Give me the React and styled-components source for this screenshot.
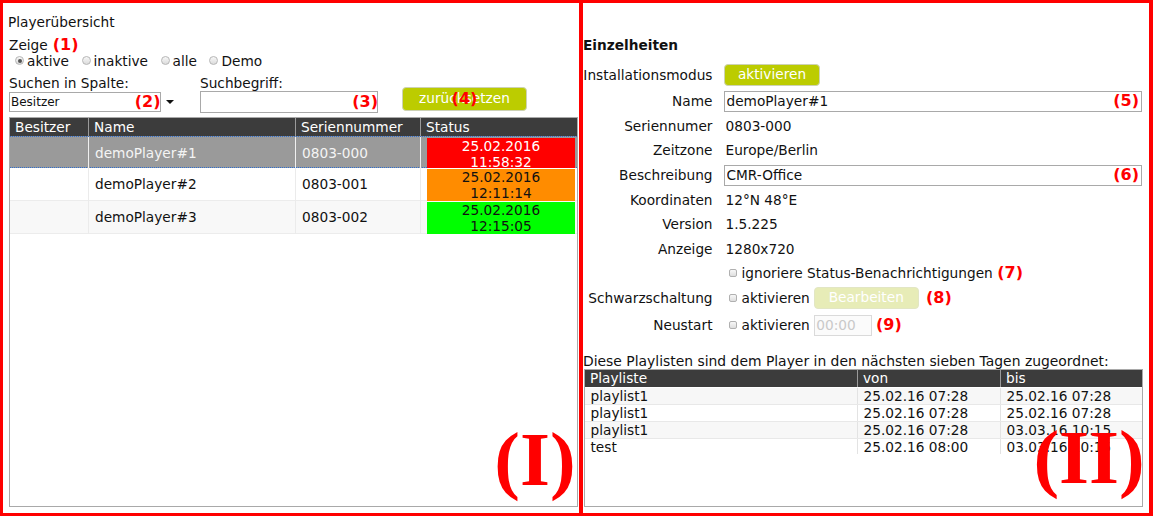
import React from 'react';
import styled, { createGlobalStyle, css } from 'styled-components';

const GlobalStyle = createGlobalStyle`
  html, body { margin: 0; padding: 0; background: #fff; }
  body {
    font-family: "DejaVu Sans", Verdana, sans-serif;
    font-size: 13.7px;
    color: #111;
  }
  *, *::before, *::after { box-sizing: border-box; }
  input, select, button { font-family: "DejaVu Sans", Verdana, sans-serif; }
`;

const Screen = styled.div`
  display: flex;
  width: 1153px;
  height: 516px;
`;

const Panel = styled.section`
  position: relative;
  display: flex;
  flex-direction: column;
  flex: none;
  width: ${p => p.$w}px;
  height: 100%;
  border: 3px solid #ff0000;
  border-right-width: 4px;
  ${p => p.$noLeft && css`border-left: none;`}
  padding: ${p => p.$pad};
  overflow: hidden;
`;

const Title = styled.div`
  line-height: 16px;
  margin-left: -1px;
`;

const ShowLine = styled.div`
  margin-top: 6.2px;
  line-height: 16px;
  white-space: nowrap;
`;

const Mark = styled.span`
  color: #ff0000;
  font-weight: bold;
  font-size: 16px;
  line-height: 16px;
  white-space: nowrap;
  margin-left: ${p => p.$ml || 0}px;
`;

const OverlayMark = styled(Mark)`
  position: absolute;
  top: 50%;
  transform: translateY(-50%);
  pointer-events: none;
  ${p => p.$center
    ? css`left: 50%; transform: translate(-50%, -50%);`
    : css`right: ${p.$right}px;`}
`;

const RadioRow = styled.div`
  display: flex;
  align-items: center;
  gap: 12.5px;
  height: 16px;
  padding-left: 6px;
`;

const RadioOption = styled.label`
  display: flex;
  align-items: center;
  gap: 3px;
  line-height: 16px;
`;

const RadioDot = styled.span`
  position: relative;
  width: 9px;
  height: 9px;
  border-radius: 50%;
  border: 1px solid #b6b6b6;
  background: linear-gradient(#f7f7f7, #dcdcdc);
  &::after {
    content: '';
    display: ${p => (p.$checked ? 'block' : 'none')};
    position: absolute;
    left: 1.5px;
    top: 1.5px;
    width: 4px;
    height: 4px;
    border-radius: 50%;
    background: #555;
  }
`;

const Checkbox = styled.span`
  flex: none;
  width: 8px;
  height: 8px;
  border-radius: 2px;
  border: 1px solid #b0b0b0;
  background: linear-gradient(#f7f7f7, #dedede);
  margin-right: 4.5px;
`;

const SearchArea = styled.div`
  display: flex;
  align-items: flex-end;
  margin-top: 6px;
`;

const Field = styled.div`
  display: flex;
  flex-direction: column;
  width: ${p => p.$w}px;
  flex: none;
`;

const FieldLabel = styled.div`
  line-height: 16px;
`;

const SelectRow = styled.div`
  display: flex;
  align-items: center;
  gap: 5px;
  height: 22px;
`;

const Wrap = styled.div`
  position: relative;
  width: ${p => (p.$w ? `${p.$w}px` : 'calc(100% - 1px)')};
  height: ${p => p.$h}px;
  flex: none;
  margin-left: ${p => p.$ml || 0}px;
`;

const SelectBox = styled.select`
  appearance: none;
  -webkit-appearance: none;
  width: 100%;
  height: 100%;
  margin: 0;
  border: 1px solid #a9a9a9;
  border-radius: 0;
  background: #fff;
  color: #111;
  font-size: 12px;
  padding: 0 1px;
  outline: none;
`;

const TextInput = styled.input`
  width: 100%;
  height: 100%;
  margin: 0;
  border: 1px solid ${p => (p.$soft ? '#dadada' : '#a9a9a9')};
  border-radius: 0;
  background: ${p => (p.$soft ? '#fbfbfb' : '#fff')};
  color: #111;
  font-size: 13.7px;
  padding: 0 1.5px;
  outline: none;
  &::placeholder { color: #c9c9c9; }
`;

const Button = styled.button`
  display: flex;
  align-items: center;
  justify-content: center;
  width: ${p => p.$w}px;
  height: ${p => p.$h}px;
  padding: 0;
  margin: 0;
  border: 1px solid ${p => (p.$disabled ? '#e2e6c4' : '#cdd2b4')};
  border-radius: 4px;
  background: ${p => (p.$disabled ? '#e7ecb7' : '#bccc00')};
  color: #fff;
  font-size: 13.7px;
  line-height: 1;
  white-space: nowrap;
  cursor: default;
`;

const ButtonWrap = styled.div`
  position: relative;
  flex: none;
  margin-bottom: ${p => p.$mb || 0}px;
  margin-left: ${p => p.$ml || 0}px;
`;

const Table = styled.div`
  flex: 1;
  min-height: 0;
  display: flex;
  flex-direction: column;
  border: 1px solid #a9a9a9;
  background: #fff;
  margin-top: ${p => p.$mt || 0}px;
  margin-left: ${p => p.$ml || 0}px;
`;

const HeadRow = styled.div`
  flex: none;
  display: grid;
  grid-template-columns: ${p => p.$cols};
  height: ${p => p.$h}px;
  background: #3c3c3c;
  color: #fff;
`;

const HeadCell = styled.div`
  padding: 0 5px;
  line-height: ${p => p.$h}px;
  border-right: 1px solid #9a9a9a;
  white-space: nowrap;
  overflow: hidden;
  &:last-child { border-right: none; }
`;

const PlayerRow = styled.div`
  flex: none;
  display: grid;
  grid-template-columns: 79px 207px 125px 1fr;
  height: 33px;
  border-bottom: 1px solid #ececec;
  background: ${p => (p.$alt ? '#f8f8f8' : '#fff')};
  ${p => p.$selected && css`
    height: 32px;
    border-top: 1px dotted #2f6fd0;
    border-bottom: 1px dotted #2f6fd0;
    background: #9a9a9a;
    color: #f4f4f4;
  `}
`;

const Cell = styled.div`
  display: flex;
  align-items: center;
  padding: 0 6px;
  white-space: nowrap;
  border-right: 1px solid ${p => (p.$sel ? '#f0f0f0' : '#ebebeb')};
  &:last-child { border-right: none; }
`;

const StatusCell = styled.div`
  display: flex;
  padding: 1px 2px 0 6px;
`;

const StatusBox = styled.div`
  flex: 1;
  background: ${p => p.$bg};
  color: ${p => p.$fg};
  text-align: center;
  line-height: 16px;
`;

const Heading = styled.div`
  font-weight: bold;
  line-height: 16px;
`;

const Form = styled.div`
  display: grid;
  grid-template-columns: 129.5px 1fr;
  grid-template-rows: 28px repeat(9, 24.6px) 30px;
  column-gap: 11.5px;
  align-items: center;
  margin-top: 8.4px;
`;

const Label = styled.div`
  text-align: right;
  line-height: 16px;
  white-space: nowrap;
`;

const Value = styled.div`
  display: flex;
  align-items: center;
  line-height: 16px;
  white-space: nowrap;
  padding-left: ${p => p.$indent || 0}px;
`;

const Caption = styled.div`
  margin-top: 12.9px;
  line-height: 16px;
  font-size: 13.9px;
  white-space: nowrap;
`;

const PlaylistBody = styled.div`
  flex: none;
  height: 66.5px;
  padding-top: 1px;
  overflow: hidden;
`;

const PlaylistRow = styled.div`
  display: grid;
  grid-template-columns: 273px 143px 1fr;
  height: 17px;
  border-bottom: 1px solid #e8e8e8;
  background: ${p => (p.$alt ? '#f7f7f7' : '#fff')};
`;

const PlaylistCell = styled.div`
  padding: 0 5.5px;
  line-height: 16px;
  white-space: nowrap;
  overflow: hidden;
  border-right: 1px solid #e3e3e3;
  &:last-child { border-right: none; }
`;

const BigMark = styled.div`
  position: absolute;
  right: ${p => p.$right}px;
  bottom: ${p => p.$bottom}px;
  font-family: "Liberation Serif", "Times New Roman", serif;
  font-weight: bold;
  font-size: 77px;
  line-height: 1;
  color: #ff0000;
  pointer-events: none;
  z-index: 2;
`;

const players = [
  { name: 'demoPlayer#1', serial: '0803-000', date: '25.02.2016', time: '11:58:32', status: 'error', selected: true },
  { name: 'demoPlayer#2', serial: '0803-001', date: '25.02.2016', time: '12:11:14', status: 'warn' },
  { name: 'demoPlayer#3', serial: '0803-002', date: '25.02.2016', time: '12:15:05', status: 'ok' },
];

const statusColors = {
  error: { bg: '#ff0000', fg: '#ffffff' },
  warn: { bg: '#ff8c00', fg: '#111111' },
  ok: { bg: '#00ff00', fg: '#111111' },
};

const playlists = [
  ['playlist1', '25.02.16 07:28', '25.02.16 07:28'],
  ['playlist1', '25.02.16 07:28', '25.02.16 07:28'],
  ['playlist1', '25.02.16 07:28', '03.03.16 10:15'],
  ['test', '25.02.16 08:00', '03.03.16 10:15'],
];

const ArrowDown = () => (
  <svg width="8" height="4" viewBox="0 0 8 4" aria-hidden="true">
    <polygon points="0,0 8,0 4,4" fill="#111" />
  </svg>
);

function PlayerOverview() {
  return (
    <Panel $w={583} $pad="11.4px 1px 6px 6px">
      <Title>Playerübersicht</Title>
      <ShowLine>
        Zeige<Mark $ml={5}>(1)</Mark>
      </ShowLine>
      <RadioRow>
        {['aktive', 'inaktive', 'alle', 'Demo'].map((o, i) => (
          <RadioOption key={o}>
            <RadioDot $checked={i === 0} />
            {o}
          </RadioOption>
        ))}
      </RadioRow>
      <SearchArea>
        <Field $w={191}>
          <FieldLabel>Suchen in Spalte:</FieldLabel>
          <SelectRow>
            <Wrap $w={152} $h={20}>
              <SelectBox defaultValue="Besitzer">
                <option>Besitzer</option>
                <option>Name</option>
                <option>Seriennummer</option>
              </SelectBox>
              <OverlayMark $right={0.5}>(2)</OverlayMark>
            </Wrap>
            <ArrowDown />
          </SelectRow>
        </Field>
        <Field $w={202}>
          <FieldLabel>Suchbegriff:</FieldLabel>
          <Wrap $w={178} $h={22}>
            <TextInput defaultValue="" />
            <OverlayMark $right={0}>(3)</OverlayMark>
          </Wrap>
        </Field>
        <ButtonWrap $mb={1.6}>
          <Button $w={125} $h={24}>zurücksetzen</Button>
          <OverlayMark $center>(4)</OverlayMark>
        </ButtonWrap>
      </SearchArea>
      <Table $mt={4.4}>
        <HeadRow $cols="79px 207px 125px 1fr" $h={18}>
          {['Besitzer', 'Name', 'Seriennummer', 'Status'].map(h => (
            <HeadCell key={h} $h={18}>{h}</HeadCell>
          ))}
        </HeadRow>
        {players.map((p, i) => {
          const c = statusColors[p.status];
          return (
            <PlayerRow key={p.serial} $selected={p.selected} $alt={i % 2 === 0}>
              <Cell $sel={p.selected} />
              <Cell $sel={p.selected}>{p.name}</Cell>
              <Cell $sel={p.selected}>{p.serial}</Cell>
              <StatusCell>
                <StatusBox $bg={c.bg} $fg={c.fg}>
                  {p.date}
                  <br />
                  {p.time}
                </StatusBox>
              </StatusCell>
            </PlayerRow>
          );
        })}
      </Table>
      <BigMark $right={3.4} $bottom={15.5}>(I)</BigMark>
    </Panel>
  );
}

function Details() {
  return (
    <Panel $w={570} $noLeft $pad="33.6px 6px 6px 0">
      <Heading>Einzelheiten</Heading>
      <Form>
        <Label>Installationsmodus</Label>
        <Value>
          <Button $w={96} $h={22}>aktivieren</Button>
        </Value>

        <Label>Name</Label>
        <Value>
          <Wrap $h={21}>
            <TextInput defaultValue="demoPlayer#1" />
            <OverlayMark $right={3}>(5)</OverlayMark>
          </Wrap>
        </Value>

        <Label>Seriennumer</Label>
        <Value $indent={1.5}>0803-000</Value>

        <Label>Zeitzone</Label>
        <Value $indent={1.5}>Europe/Berlin</Value>

        <Label>Beschreibung</Label>
        <Value>
          <Wrap $h={21}>
            <TextInput defaultValue="CMR-Office" />
            <OverlayMark $right={3}>(6)</OverlayMark>
          </Wrap>
        </Value>

        <Label>Koordinaten</Label>
        <Value $indent={1.5}>12°N 48°E</Value>

        <Label>Version</Label>
        <Value $indent={1.5}>1.5.225</Value>

        <Label>Anzeige</Label>
        <Value $indent={1.5}>1280x720</Value>

        <Label />
        <Value $indent={5}>
          <Checkbox />
          ignoriere Status-Benachrichtigungen
          <Mark $ml={4.5}>(7)</Mark>
        </Value>

        <Label>Schwarzschaltung</Label>
        <Value $indent={5}>
          <Checkbox />
          aktivieren
          <ButtonWrap $ml={4}>
            <Button $w={105} $h={22} $disabled>Bearbeiten</Button>
          </ButtonWrap>
          <Mark $ml={7.3}>(8)</Mark>
        </Value>

        <Label>Neustart</Label>
        <Value $indent={5}>
          <Checkbox />
          aktivieren
          <Wrap $w={58} $h={21} $ml={4}>
            <TextInput $soft placeholder="00:00" disabled />
          </Wrap>
          <Mark $ml={4.3}>(9)</Mark>
        </Value>
      </Form>

      <Caption>Diese Playlisten sind dem Player in den nächsten sieben Tagen zugeordnet:</Caption>
      <Table $ml={1}>
        <HeadRow $cols="273px 143px 1fr" $h={17}>
          {['Playliste', 'von', 'bis'].map(h => (
            <HeadCell key={h} $h={17}>{h}</HeadCell>
          ))}
        </HeadRow>
        <PlaylistBody>
          {playlists.map((r, i) => (
            <PlaylistRow key={i} $alt={i % 2 === 0}>
              {r.map((v, j) => (
                <PlaylistCell key={j}>{v}</PlaylistCell>
              ))}
            </PlaylistRow>
          ))}
        </PlaylistBody>
      </Table>
      <BigMark $right={4.4} $bottom={17.5}>(II)</BigMark>
    </Panel>
  );
}

export default function App() {
  return (
    <>
      <GlobalStyle />
      <Screen>
        <PlayerOverview />
        <Details />
      </Screen>
    </>
  );
}
